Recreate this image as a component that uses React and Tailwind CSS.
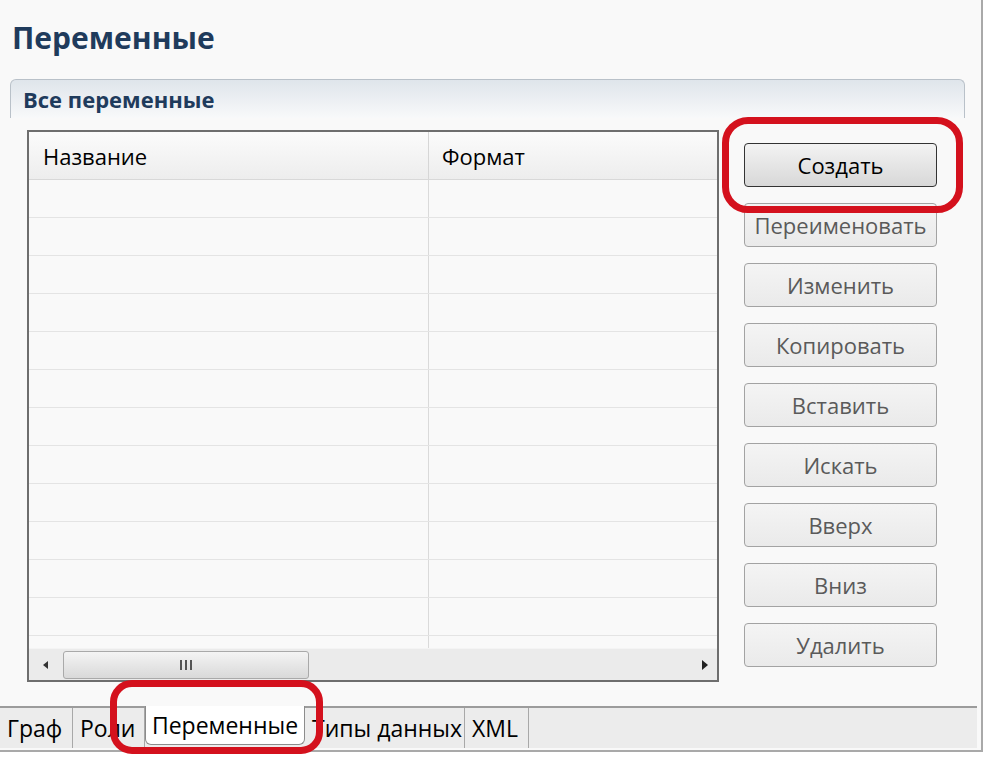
import React from 'react';

const font = { fontFamily: '"Open Sans", "Noto Sans", sans-serif' };

const buttons = [
  'Переименовать',
  'Изменить',
  'Копировать',
  'Вставить',
  'Искать',
  'Вверх',
  'Вниз',
  'Удалить',
];

const tabs = [
  { label: 'Граф', w: 'w-[73px]' },
  { label: 'Роли', w: 'w-[72px]' },
  { label: 'Переменные', w: 'w-[160px]', active: true },
  { label: 'Типы данных', w: 'w-[160px]' },
  { label: 'XML', w: 'w-[64px]' },
];

const App = () => {
  return (
    <div className="relative w-[990px] h-[758px] overflow-hidden bg-white" style={font}>
      {/* Window frame */}
      <div className="w-[983px] h-[752px] bg-[#f9f9f9] border-r-2 border-b-2 border-[#a9a9a9] flex flex-col">
        <h1 className="pl-[12px] pt-[18px] h-[79px] text-[30px] leading-[40px] font-bold text-[#1f3b5c]">
          Переменные
        </h1>

        {/* Section */}
        <div className="ml-[10px] w-[955px]">
          <div className="h-[39px] rounded-t-[6px] border-t border-x border-[#b9c1c9] bg-gradient-to-b from-[#dfe5eb] to-[#f8f9fa] pl-[12px] pt-[4px] text-[22px] leading-[30px] font-bold text-[#1f3b5c]">
            Все переменные
          </div>

          <div className="flex pl-[17px] pt-[12px]">
            {/* Table */}
            <div className="w-[692px] h-[552px] border-2 border-[#6e6e6e] bg-[#f9f9f9] flex flex-col">
              <div className="flex h-[48px] border-b border-[#d8d8d8] bg-gradient-to-b from-[#fbfbfb] to-[#ededed] text-[22px] text-black">
                <div className="w-[400px] border-r border-[#d6d6d6] pl-[14px] pt-[2px] flex items-center">Название</div>
                <div className="flex-1 pl-[13px] pt-[2px] flex items-center">Формат</div>
              </div>
              <div className="flex-1 overflow-hidden">
                {Array.from({ length: 13 }).map((_, i) => (
                  <div key={i} className="flex h-[38px] border-b border-[#e4e4e4]">
                    <div className="w-[400px] border-r border-[#dadada]" />
                    <div className="flex-1" />
                  </div>
                ))}
              </div>
              {/* Horizontal scrollbar */}
              <div className="h-[32px] flex items-center bg-[#ebebeb] border-t border-[#f4f4f4] pr-[8px]">
                <div className="w-[34px] flex justify-center">
                  <svg width="8" height="10" viewBox="0 0 8 10"><path d="M6 1 L1 5 L6 9 Z" fill="#333" /></svg>
                </div>
                <div className="w-[246px] h-[28px] rounded-[3px] border border-[#a9a9a9] bg-gradient-to-b from-[#f4f4f4] to-[#d9d9d9] flex items-center justify-center gap-[3px]">
                  <span className="w-[2px] h-[10px] bg-[#555]" />
                  <span className="w-[2px] h-[10px] bg-[#555]" />
                  <span className="w-[2px] h-[10px] bg-[#555]" />
                </div>
                <div className="flex-1" />
                <svg width="8" height="12" viewBox="0 0 8 12"><path d="M1 1 L7 6 L1 11 Z" fill="#222" /></svg>
              </div>
            </div>

            {/* Buttons */}
            <div className="ml-[25px] pt-[13px] flex flex-col gap-[16px]">
              <button className="w-[193px] h-[44px] rounded-[4px] border-[1.5px] border-[#333] bg-gradient-to-b from-[#f3f3f3] to-[#d8d8d8] text-[22px] text-black">
                Создать
              </button>
              {buttons.map((b) => (
                <button
                  key={b}
                  className="w-[193px] h-[44px] rounded-[4px] border border-[#a3a3a3] bg-gradient-to-b from-[#f4f4f4] to-[#eaeaea] text-[22px] text-[#5a5a5a]"
                >
                  {b}
                </button>
              ))}
            </div>
          </div>
        </div>

        {/* Tab strip */}
        <div className="mt-auto mb-[2px] h-[42px] w-[977px] border-t-2 border-[#9c9c9c] bg-[#ececec] flex text-[23px] text-black">
          {tabs.map((t) =>
            t.active ? (
              <div
                key={t.label}
                className={`${t.w} h-[39px] -mt-[2px] bg-white border-x border-b border-[#8c8c8c] rounded-b-[6px] flex items-center justify-center`}
              >
                {t.label}
              </div>
            ) : (
              <div key={t.label} className={`${t.w} border-r border-[#a8a8a8] flex items-center pl-[7px]`}>
                {t.label}
              </div>
            )
          )}
        </div>
      </div>

      {/* Red annotation marks */}
      <div className="absolute left-[722px] top-[117px] w-[241px] h-[96px] rounded-[26px] border-[7px] border-[#d4111d]" />
      <div className="absolute left-[110px] top-[680px] w-[213px] h-[74px] rounded-[22px] border-[7px] border-[#d4111d]" />
    </div>
  );
};

export default App;
